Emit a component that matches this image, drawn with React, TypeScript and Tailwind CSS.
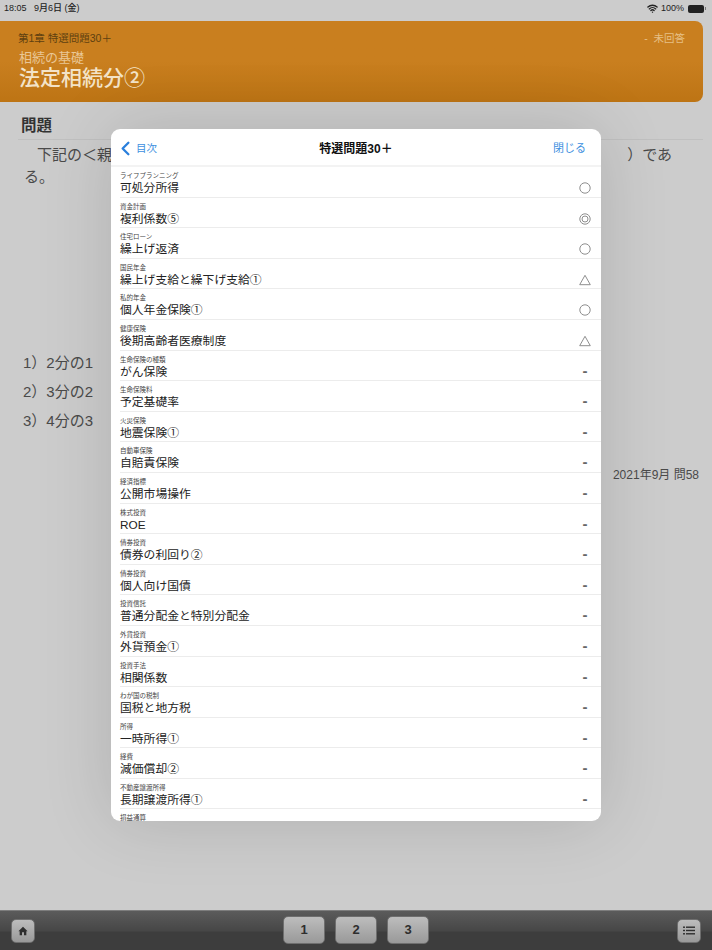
import React from "react";
import { Wifi, ChevronLeft } from "lucide-react";

const rows: [string, string, string][] = [
  ["ライフプランニング", "可処分所得", "o"],
  ["資金計画", "複利係数⑤", "d"],
  ["住宅ローン", "繰上げ返済", "o"],
  ["国民年金", "繰上げ支給と繰下げ支給①", "t"],
  ["私的年金", "個人年金保険①", "o"],
  ["健康保険", "後期高齢者医療制度", "t"],
  ["生命保険の種類", "がん保険", "-"],
  ["生命保険料", "予定基礎率", "-"],
  ["火災保険", "地震保険①", "-"],
  ["自動車保険", "自賠責保険", "-"],
  ["経済指標", "公開市場操作", "-"],
  ["株式投資", "ROE", "-"],
  ["債券投資", "債券の利回り②", "-"],
  ["債券投資", "個人向け国債", "-"],
  ["投資信託", "普通分配金と特別分配金", "-"],
  ["外貨投資", "外貨預金①", "-"],
  ["投資手法", "相関係数", "-"],
  ["わが国の税制", "国税と地方税", "-"],
  ["所得", "一時所得①", "-"],
  ["経費", "減価償却②", "-"],
  ["不動産譲渡所得", "長期譲渡所得①", "-"],
  ["損益通算", "", ""],
];

function Mark({ kind }: { kind: string }) {
  if (kind === "-") return <span className="-mt-[1px] text-[15px] leading-[12px] text-[#666] font-bold">-</span>;
  if (!kind) return null;
  return (
    <svg width="12" height="12" viewBox="0 0 12 12" fill="none" stroke="#8e8e8e" strokeWidth="1">
      {kind === "o" && <circle cx="6" cy="6" r="5.2" />}
      {kind === "d" && (
        <>
          <circle cx="6" cy="6" r="5.2" />
          <circle cx="6" cy="6" r="3" />
        </>
      )}
      {kind === "t" && <path d="M6 1.3 L11.3 10.7 H0.7 Z" />}
    </svg>
  );
}

function Square({ children, size }: { children: React.ReactNode; size: string }) {
  return (
    <div
      className={`${size} flex items-center justify-center rounded-[5px] border border-[#6e6e6e] bg-gradient-to-b from-[#bdbdbd] to-[#999999] text-[#2e2e2e]`}
    >
      {children}
    </div>
  );
}

export default function App() {
  return (
    <div
      className="relative h-[950px] w-[712px] overflow-hidden flex flex-col bg-[#cccccc] text-[#3a3a3a]"
      style={{ fontFamily: '"Liberation Sans","Noto Sans CJK JP",sans-serif' }}
    >
      {/* status bar */}
      <div className="flex h-[21px] shrink-0 items-center justify-between pl-[4px] pr-[6px] pb-[7px] pt-[3px] text-[9px] font-medium text-[#222]">
        <span>18:05&nbsp;&nbsp; 9月6日 (金)</span>
        <span className="flex items-center gap-[3px]">
          <Wifi size={11} strokeWidth={3} />
          <span>100%</span>
          <span className="ml-[1px] flex items-center">
            <span className="block h-[8px] w-[16px] rounded-[2px] bg-[#222]" />
            <span className="ml-[1px] block h-[3px] w-[1px] bg-[#777]" />
          </span>
        </span>
      </div>

      {/* orange header */}
      <div className="mr-[9px] h-[81px] shrink-0 rounded-r-[8px] bg-gradient-to-b from-[#c97f1f] via-[#c97f1f] to-[#bd7414] pl-[18px] pr-[18px] pt-[10px]">
        <div className="flex items-center justify-between text-[10.5px] leading-[14px]">
          <span className="text-[#5e3f10]">第1章 特選問題30＋</span>
          <span className="text-[#e6bf85]">-&nbsp; 未回答</span>
        </div>
        <div className="mt-[5px] pl-[1px] text-[13px] leading-[16px] text-[#e9c796]">相続の基礎</div>
        <div className="pl-[1px] text-[21px] font-medium leading-[24px] text-[#f3e3c8]">法定相続分②</div>
      </div>

      {/* body */}
      <div className="mr-[9px] flex-1 pl-[18px]">
        <div className="mt-[14px] border-b border-[#c0c0c0] pb-[3px] pl-[3px] text-[15.5px] font-bold leading-[20px] text-[#333]">
          問題
        </div>
        <div className="mt-[4px] pl-[6px] pr-[31px] text-[15px] leading-[22px] text-[#4a4a4a]">
          <div className="flex justify-between pl-[13px]">
            <span>下記の＜親</span>
            <span>）であ</span>
          </div>
          <div>る。</div>
        </div>
        <div className="mt-[165px] flex flex-col gap-[9px] pl-[5px] text-[15px] leading-[20px] text-[#4a4a4a]">
          <div>1）2分の1</div>
          <div>2）3分の2</div>
          <div>3）4分の3</div>
        </div>
        <div className="mt-[36px] pr-[4px] text-right text-[12px] leading-[16px] text-[#4a4a4a]">2021年9月 問58</div>
      </div>

      {/* bottom bar */}
      <div className="relative flex h-[40px] shrink-0 items-center justify-between border-t border-[#7d7d7d] bg-[linear-gradient(#5b5b5b,#474747_50%,#3d3d3d_55%,#3d3d3d)] pl-[11px] pr-[11px]">
        <Square size="h-[24px] w-[24px]">
          <svg width="10" height="10" viewBox="0 0 12 12" fill="#2e2e2e">
            <path d="M6 1 L0.5 6.2 L2 6.2 V11 H4.8 V7.6 H7.2 V11 H10 V6.2 L11.5 6.2 Z" />
          </svg>
        </Square>
        <div className="absolute left-[283px] top-[5px] flex gap-[10px] text-[13px] font-bold">
          <Square size="h-[28px] w-[42px]">1</Square>
          <Square size="h-[28px] w-[42px]">2</Square>
          <Square size="h-[28px] w-[42px]">3</Square>
        </div>
        <Square size="h-[24px] w-[24px]">
          <svg width="12" height="9" viewBox="0 0 12 9" fill="#2e2e2e">
            <rect x="0" y="0.5" width="2" height="1.4" />
            <rect x="3" y="0.5" width="9" height="1.4" />
            <rect x="0" y="3.8" width="2" height="1.4" />
            <rect x="3" y="3.8" width="9" height="1.4" />
            <rect x="0" y="7.1" width="2" height="1.4" />
            <rect x="3" y="7.1" width="9" height="1.4" />
          </svg>
        </Square>
      </div>

      {/* modal */}
      <div className="absolute left-[111px] top-[129px] flex h-[692px] w-[490px] flex-col overflow-hidden rounded-[9px] bg-white shadow-[0_0_70px_rgba(0,0,0,0.14)]">
        <div className="grid h-[38px] shrink-0 grid-cols-3 items-center border-b-2 border-[#f3f3f3] pl-[3px] pr-[15px] pt-[3px]">
          <span className="flex items-center text-[10.5px] text-[#3d8fe0]">
            <ChevronLeft size={23} strokeWidth={2.4} className="text-[#2a7fdc]" />
            <span className="-ml-[1px]">目次</span>
          </span>
          <span className="whitespace-nowrap pl-[12px] text-center text-[12px] font-bold text-[#111]">特選問題30＋</span>
          <span className="text-right text-[11px] text-[#3d8fe0]">閉じる</span>
        </div>
        <div>
          {rows.map(([tag, title, mark], i) => (
            <div key={i} className="ml-[9px] flex h-[30.6px] items-start justify-between border-b border-[#ececec] pr-[10px] pt-[5px]">
              <div className="min-w-0">
                <div className="text-[6.5px] leading-[8px] text-[#444]">{tag}</div>
                <div className="text-[11.8px] leading-[17px] text-[#222]">{title}</div>
              </div>
              <div className="flex w-[12px] justify-center pt-[10px]">
                <Mark kind={mark} />
              </div>
            </div>
          ))}
        </div>
      </div>
    </div>
  );
}
